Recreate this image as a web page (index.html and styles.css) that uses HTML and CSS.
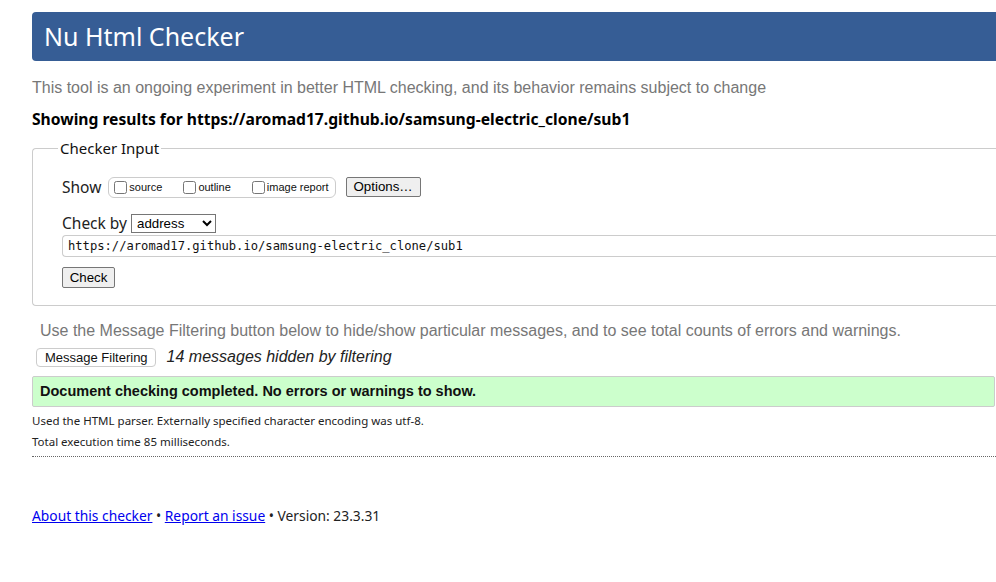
FILE: index.html
```html
<!DOCTYPE html>
<html lang="en">
<head>
<meta charset="utf-8">
<title>Nu Html Checker</title>
<link rel="stylesheet" href="styles.css">
</head>
<body>
<h1 class="title">Nu Html Checker</h1>
<p class="intro">This tool is an ongoing experiment in better HTML checking, and its behavior remains subject to change</p>
<p class="showing">Showing results for https://aromad17.github.io/samsung-electric_clone/sub1</p>
<fieldset class="input-set">
  <legend class="legend">Checker Input</legend>
  <div class="show-row">
    <span class="label">Show</span>
    <span class="checks">
      <label class="check"><input type="checkbox"><span>source</span></label>
      <label class="check"><input type="checkbox"><span>outline</span></label>
      <label class="check"><input type="checkbox"><span>image report</span></label>
    </span>
    <button class="btn btn-options" type="button">Options…</button>
  </div>
  <div class="checkby-row">
    <span class="label">Check by</span>
    <select class="select"><option>address</option></select>
  </div>
  <div class="url">https://aromad17.github.io/samsung-electric_clone/sub1</div>
  <button class="btn btn-check" type="button">Check</button>
</fieldset>
<p class="filter-note">Use the Message Filtering button below to hide/show particular messages, and to see total counts of errors and warnings.</p>
<div class="filter-row">
  <button class="btn-filter" type="button">Message Filtering</button>
  <em class="hidden-count">14 messages hidden by filtering</em>
</div>
<div class="success">Document checking completed. No errors or warnings to show.</div>
<p class="details">Used the HTML parser. Externally specified character encoding was utf-8.</p>
<p class="details">Total execution time 85 milliseconds.</p>
<hr class="dotted">
<p class="footer"><a href="#">About this checker</a> • <a href="#">Report an issue</a> • Version: 23.3.31</p>
</body>
</html>
```

FILE: styles.css
```css
html, body {
  margin: 0;
  padding: 0;
  overflow: hidden;
  background: #fff;
}
body {
  padding: 12px 0 0 32px;
  font-family: "Noto Sans", "Liberation Sans", sans-serif;
  color: #111;
}
.title {
  margin: 0;
  height: 49px;
  box-sizing: border-box;
  padding: 7px 0 0 12px;
  background: #365d95;
  color: #fff;
  font-weight: normal;
  font-size: 25px;
  line-height: 34px;
  border-radius: 4px 0 0 4px;
}
.intro {
  margin: 17px 0 0 0;
  font-family: "Liberation Sans", Arial, sans-serif;
  font-size: 16px;
  line-height: 20px;
  color: #777;
}
.showing {
  margin: 10px 0 0 0;
  font-size: 15.65px;
  line-height: 22px;
  font-weight: bold;
  color: #000;
}
.input-set {
  margin: 8px 0 0 0;
  padding: 17px 0 17px 29px;
  border: 1px solid #ccc;
  border-right: none;
  border-radius: 4px 0 0 4px;
}
.legend {
  margin-left: -4px;
  padding: 0 2px;
  font-size: 15px;
  line-height: 20px;
  color: #111;
}
.show-row {
  display: flex;
  align-items: center;
  height: 24px;
}
.label {
  font-size: 15.5px;
  color: #222;
}
.checks {
  display: flex;
  align-items: center;
  margin-left: 7px;
  height: 21px;
  box-sizing: border-box;
  border: 1px solid #ccc;
  border-radius: 6px;
  padding: 0 6px 0 5px;
  gap: 21px;
}
.check {
  display: flex;
  align-items: center;
  font-family: "Liberation Sans", Arial, sans-serif;
  font-size: 11px;
  color: #111;
}
.check input {
  margin: 0 2px 0 0;
  width: 13px;
  height: 13px;
}
.btn {
  font-family: "Liberation Sans", Arial, sans-serif;
  font-size: 13.3px;
  color: #000;
  background: #efefef;
  border: 1px solid #767676;
  border-radius: 2px;
  padding: 0 6px;
  height: 20px;
  line-height: 18px;
}
.btn-options {
  margin-left: 10px;
  width: 75px;
}
.checkby-row {
  display: flex;
  align-items: center;
  margin-top: 13px;
  height: 22px;
}
.select {
  margin-left: 4px;
  width: 85px;
  height: 19px;
  font-family: "Liberation Sans", Arial, sans-serif;
  font-size: 13.3px;
  border: 1px solid #767676;
  border-radius: 0;
  background: #fff;
  color: #000;
  padding: 0 1px;
}
.url {
  margin-top: 1px;
  height: 22px;
  box-sizing: border-box;
  border: 1px solid #ccc;
  border-right: none;
  border-radius: 4px 0 0 4px;
  padding: 0 0 0 5px;
  font-family: "DejaVu Sans Mono", "Liberation Mono", monospace;
  font-size: 12.15px;
  line-height: 21px;
  color: #111;
}
.btn-check {
  margin-top: 10px;
  width: 53px;
  height: 21px;
}
.filter-note {
  margin: 15px 0 0 8px;
  font-family: "Liberation Sans", Arial, sans-serif;
  font-size: 16px;
  line-height: 20px;
  color: #777;
}
.filter-row {
  display: flex;
  align-items: center;
  margin: 6px 0 0 4px;
  height: 20px;
}
.btn-filter {
  font-family: "Liberation Sans", Arial, sans-serif;
  font-size: 13px;
  color: #111;
  background: #fff;
  border: 1px solid #ccc;
  border-radius: 4px;
  height: 19px;
  padding: 0 7px 0 8px;
  line-height: 17px;
}
.hidden-count {
  margin-left: 11px;
  font-family: "Liberation Sans", Arial, sans-serif;
  font-size: 16px;
  color: #222;
}
.success {
  margin: 9px 1px 0 0;
  height: 31px;
  box-sizing: border-box;
  background: #ccffcc;
  border: 1px solid #ccc;
  border-radius: 2px;
  padding: 0 0 0 7px;
  font-family: "Liberation Sans", Arial, sans-serif;
  font-weight: bold;
  font-size: 14.5px;
  line-height: 29px;
  color: #111;
}
.details {
  margin: 6px 0 0 0;
  font-size: 11.5px;
  line-height: 16px;
  color: #222;
}
.details + .details {
  margin-top: 5px;
}
.dotted {
  margin: 6px 0 0 0;
  border: none;
  border-top: 1px dotted #666;
  height: 0;
}
.footer {
  margin: 49px 0 0 0;
  font-size: 13.8px;
  line-height: 20px;
  color: #222;
}
.footer a {
  color: #00e;
}
```
